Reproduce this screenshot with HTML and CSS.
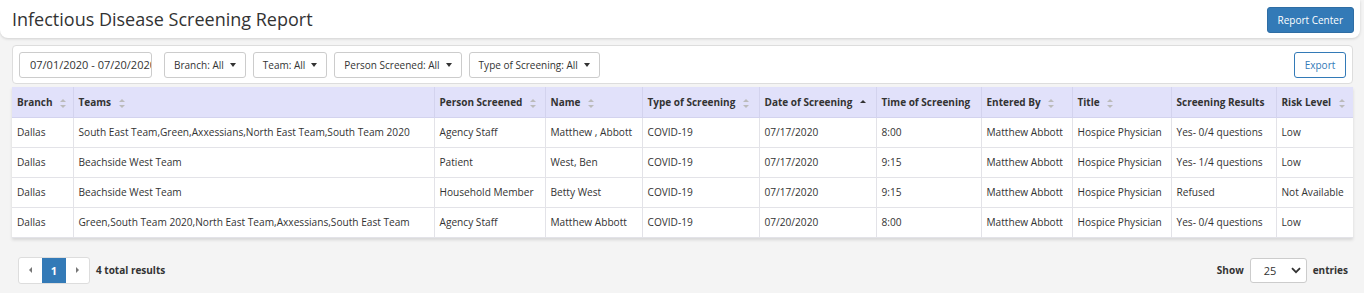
FILE: index.html
```html
<!DOCTYPE html>
<html lang="en">
<head>
  <meta charset="UTF-8">
  <title>Infectious Disease Screening Report</title>
  <link rel="stylesheet" href="styles.css">
</head>
<body>
  <header class="page-header">
    <h1>Infectious Disease Screening Report</h1>
    <button class="btn-primary">Report Center</button>
  </header>

  <main class="content">
    <div class="filter-bar">
      <input class="date-range" type="text" value="07/01/2020 - 07/20/2020">
      <button class="dropdown">Branch: All <span class="caret"></span></button>
      <button class="dropdown">Team: All <span class="caret"></span></button>
      <button class="dropdown">Person Screened: All <span class="caret"></span></button>
      <button class="dropdown">Type of Screening: All <span class="caret"></span></button>
      <button class="btn-export">Export</button>
    </div>

    <table class="report-table">
      <colgroup>
        <col style="width:61px">
        <col style="width:361px">
        <col style="width:111px">
        <col style="width:97px">
        <col style="width:117px">
        <col style="width:117px">
        <col style="width:105px">
        <col style="width:91px">
        <col style="width:99px">
        <col style="width:105px">
        <col>
      </colgroup>
      <thead>
        <tr>
          <th>Branch <span class="sort"></span></th>
          <th>Teams <span class="sort"></span></th>
          <th>Person Screened <span class="sort"></span></th>
          <th>Name <span class="sort"></span></th>
          <th>Type of Screening <span class="sort"></span></th>
          <th>Date of Screening <span class="sort-up"></span></th>
          <th>Time of Screening</th>
          <th>Entered By <span class="sort"></span></th>
          <th>Title <span class="sort"></span></th>
          <th>Screening Results</th>
          <th>Risk Level <span class="sort"></span></th>
        </tr>
      </thead>
      <tbody>
        <tr>
          <td>Dallas</td>
          <td>South East Team,Green,Axxessians,North East Team,South Team 2020</td>
          <td>Agency Staff</td>
          <td>Matthew , Abbott</td>
          <td>COVID-19</td>
          <td>07/17/2020</td>
          <td>8:00</td>
          <td>Matthew Abbott</td>
          <td>Hospice Physician</td>
          <td>Yes- 0/4 questions</td>
          <td>Low</td>
        </tr>
        <tr>
          <td>Dallas</td>
          <td>Beachside West Team</td>
          <td>Patient</td>
          <td>West, Ben</td>
          <td>COVID-19</td>
          <td>07/17/2020</td>
          <td>9:15</td>
          <td>Matthew Abbott</td>
          <td>Hospice Physician</td>
          <td>Yes- 1/4 questions</td>
          <td>Low</td>
        </tr>
        <tr>
          <td>Dallas</td>
          <td>Beachside West Team</td>
          <td>Household Member</td>
          <td>Betty West</td>
          <td>COVID-19</td>
          <td>07/17/2020</td>
          <td>9:15</td>
          <td>Matthew Abbott</td>
          <td>Hospice Physician</td>
          <td>Refused</td>
          <td>Not Available</td>
        </tr>
        <tr>
          <td>Dallas</td>
          <td>Green,South Team 2020,North East Team,Axxessians,South East Team</td>
          <td>Agency Staff</td>
          <td>Matthew Abbott</td>
          <td>COVID-19</td>
          <td>07/20/2020</td>
          <td>8:00</td>
          <td>Matthew Abbott</td>
          <td>Hospice Physician</td>
          <td>Yes- 0/4 questions</td>
          <td>Low</td>
        </tr>
      </tbody>
    </table>

    <div class="table-footer">
      <div class="pager-wrap">
        <div class="pager">
          <span class="page-arrow"><span class="tri-left"></span></span>
          <span class="page-num">1</span>
          <span class="page-arrow"><span class="tri-right"></span></span>
        </div>
        <span class="total">4 total results</span>
      </div>
      <div class="page-size">
        <span>Show</span>
        <div class="select">
          <span>25</span>
          <svg width="10" height="7" viewBox="0 0 10 7"><path d="M1 1.2 L5 5.2 L9 1.2" fill="none" stroke="#333" stroke-width="1.8"/></svg>
        </div>
        <span>entries</span>
      </div>
    </div>
  </main>
</body>
</html>
```

FILE: styles.css
```css
body {
  margin: 0;
  background-color: #f4f4f4;
  font-family: "Open Sans", Arial, sans-serif;
  color: #333;
}

.page-header {
  width: 1360px;
  height: 38px;
  box-sizing: border-box;
  background-color: #fff;
  border-radius: 0 0 8px 8px;
  box-shadow: 0 1px 3px rgba(0, 0, 0, 0.15);
  display: flex;
  align-items: center;
  justify-content: space-between;
  padding: 0 6px 0 12px;
}

.page-header h1 {
  margin: 0;
  font-size: 18px;
  font-weight: 400;
  color: #333;
}

.btn-primary {
  height: 26px;
  padding: 0 10px;
  background-color: #337ab7;
  color: #fff;
  border: 1px solid #2e6da4;
  border-radius: 3px;
  font-family: inherit;
  font-size: 10px;
  margin-top: 2px;
}

.content {
  padding: 7px 11px 0 12px;
}

.filter-bar {
  display: flex;
  align-items: center;
  background-color: #fff;
  border: 1px solid #ddd;
  border-radius: 4px;
  height: 39px;
  box-sizing: border-box;
  padding: 0 6px;
}

.date-range {
  width: 133px;
  height: 26px;
  box-sizing: border-box;
  border: 1px solid #ccc;
  border-radius: 3px;
  padding: 0 0 0 10px;
  font-family: inherit;
  font-size: 11px;
  color: #333;
  margin-right: 12px;
}

.dropdown {
  height: 26px;
  box-sizing: border-box;
  border: 1px solid #ccc;
  border-radius: 3px;
  background-color: #fff;
  padding: 0 9px;
  font-family: inherit;
  font-size: 10px;
  color: #333;
  margin-right: 7px;
  display: flex;
  align-items: center;
  gap: 6px;
}

.caret {
  width: 0;
  height: 0;
  border-left: 3.5px solid transparent;
  border-right: 3.5px solid transparent;
  border-top: 4px solid #333;
}

.btn-export {
  margin-left: auto;
  height: 26px;
  width: 52px;
  box-sizing: border-box;
  border: 1px solid #337ab7;
  border-radius: 3px;
  background-color: #fff;
  color: #337ab7;
  font-family: inherit;
  font-size: 10px;
}

.report-table {
  width: 100%;
  margin-top: 3px;
  border-collapse: collapse;
  table-layout: fixed;
  background-color: #fff;
  box-shadow: 0 2px 3px rgba(0, 0, 0, 0.12);
  font-size: 10.15px;
}

.report-table th,
.report-table td {
  height: 30px;
  padding: 0 5px;
  text-align: left;
  white-space: nowrap;
  overflow: hidden;
  border: 1px solid #e3e3e8;
  box-sizing: border-box;
}

.report-table th {
  background-color: #e1e1fa;
  font-weight: 700;
  font-size: 10px;
  color: #333;
  border-color: #d3d3ee;
  border-top: none;
}

.report-table td {
  color: #333;
}

.report-table tr > :first-child {
  border-left: none;
}

.report-table tr > :last-child {
  border-right: none;
}

.sort {
  display: inline-block;
  vertical-align: middle;
  margin-left: 5px;
  width: 7px;
  height: 9px;
  position: relative;
}

.sort::before,
.sort::after {
  content: "";
  position: absolute;
  left: 0;
  border-left: 3px solid transparent;
  border-right: 3px solid transparent;
}

.sort::before {
  top: 0;
  border-bottom: 3.5px solid #bbb;
}

.sort::after {
  bottom: 0;
  border-top: 3.5px solid #bbb;
}

.sort-up {
  display: inline-block;
  vertical-align: middle;
  margin-left: 5px;
  margin-bottom: 4px;
  border-left: 3px solid transparent;
  border-right: 3px solid transparent;
  border-bottom: 3.5px solid #333;
}

.table-footer {
  display: flex;
  justify-content: space-between;
  align-items: center;
  margin-top: 19px;
  padding: 0 5px 0 6px;
}

.pager-wrap {
  display: flex;
  align-items: center;
  gap: 6px;
}

.pager {
  display: flex;
  height: 25px;
  border: 1px solid #ddd;
  border-radius: 3px;
  overflow: hidden;
  background-color: #fff;
}

.page-arrow {
  width: 23px;
  display: flex;
  align-items: center;
  justify-content: center;
}

.tri-left {
  border-top: 3px solid transparent;
  border-bottom: 3px solid transparent;
  border-right: 3px solid #777;
}

.tri-right {
  border-top: 3px solid transparent;
  border-bottom: 3px solid transparent;
  border-left: 3px solid #777;
}

.page-num {
  width: 24px;
  background-color: #337ab7;
  color: #fff;
  font-size: 11px;
  font-weight: 700;
  display: flex;
  align-items: center;
  justify-content: center;
}

.total {
  font-size: 10px;
  font-weight: 700;
  color: #333;
}

.page-size {
  display: flex;
  align-items: center;
  gap: 6px;
  font-size: 10px;
  font-weight: 700;
  color: #333;
}

.select {
  width: 57px;
  height: 25px;
  box-sizing: border-box;
  border: 1px solid #ccc;
  border-radius: 3px;
  background-color: #fff;
  display: flex;
  align-items: center;
  justify-content: space-between;
  padding: 0 5px 0 13px;
  font-weight: 400;
  font-size: 11px;
}
```
